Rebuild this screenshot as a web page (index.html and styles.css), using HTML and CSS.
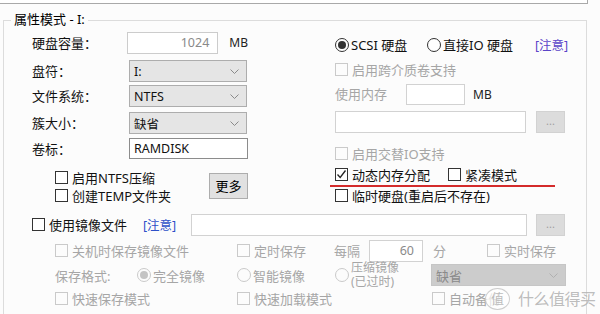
FILE: index.html
```html
<!DOCTYPE html>
<html lang="zh-CN">
<head>
    <meta charset="UTF-8">
    <meta name="viewport" content="width=device-width, initial-scale=1.0">
    <title>属性模式</title>
    <link rel="stylesheet" href="styles.css">
</head>
<body>
<div class="topbox"></div>
<div class="group">
    <div class="group-title">属性模式 - I:</div>
    <div class="main">
        <div class="col-left">
            <div class="field f1"><span class="lbl">硬盘容量：</span><span class="box num w93">1024</span><span class="unit">MB</span></div>
            <div class="field f2"><span class="lbl">盘符：</span><span class="combo w118 h21">I:<svg class="chev" width="9" height="5" viewBox="0 0 9 5"><polyline points="0.5,0.5 4.5,4.5 8.5,0.5"/></svg></span></div>
            <div class="field f3"><span class="lbl">文件系统：</span><span class="combo w118 h23">NTFS<svg class="chev" width="9" height="5" viewBox="0 0 9 5"><polyline points="0.5,0.5 4.5,4.5 8.5,0.5"/></svg></span></div>
            <div class="field f4"><span class="lbl">簇大小：</span><span class="combo w118">缺省<svg class="chev" width="9" height="5" viewBox="0 0 9 5"><polyline points="0.5,0.5 4.5,4.5 8.5,0.5"/></svg></span></div>
            <div class="field f5"><span class="lbl">卷标：</span><span class="box dark w119 h21">RAMDISK</span></div>
            <div class="opts">
                <div class="opt-list">
                    <div class="check-row"><span class="cb"></span>启用NTFS压缩</div>
                    <div class="check-row"><span class="cb"></span>创建TEMP文件夹</div>
                </div>
                <span class="btn">更多</span>
            </div>
        </div>
        <div class="col-right">
            <div class="rrow ra">
                <span class="item w92"><span class="rb on"></span>SCSI 硬盘</span>
                <span class="item w108"><span class="rb"></span>直接IO 硬盘</span>
                <span class="note purple">[注意]</span>
            </div>
            <div class="rrow rb-row off"><span class="cb"></span>启用跨介质卷支持</div>
            <div class="rrow rc off">
                <span class="w71">使用内存</span><span class="box w59 h21 lite"></span><span class="unit small">MB</span>
            </div>
            <div class="rrow rd">
                <span class="box w191 lite"></span><span class="dots">...</span>
            </div>
            <div class="rrow re off"><span class="cb"></span>启用交替IO支持</div>
            <div class="rrow rf marked">
                <span class="item w113"><span class="cb"><svg width="11" height="11" viewBox="0 0 11 11"><polyline points="1.5,5.5 4.2,8.5 9.5,1.5"/></svg></span>动态内存分配</span>
                <span class="item"><span class="cb"></span>紧凑模式</span>
            </div>
            <div class="rrow rg"><span class="cb"></span>临时硬盘(重启后不存在)</div>
        </div>
    </div>
    <div class="image-row">
        <span class="item w111"><span class="cb"></span>使用镜像文件</span>
        <span class="note blue w48">[注意]</span>
        <span class="box w336 lite"></span>
        <span class="dots gap9">...</span>
    </div>
    <div class="sub off">
        <div class="srow s1">
            <span class="item w182"><span class="cb"></span>关机时保存镜像文件</span>
            <span class="item w97"><span class="cb"></span>定时保存</span>
            <span class="w35">每隔</span>
            <span class="box num w54 lite">60</span>
            <span class="w64 pad10">分</span>
            <span class="item"><span class="cb"></span>实时保存</span>
        </div>
        <div class="srow s2">
            <span class="w82">保存格式:</span>
            <span class="item w100"><span class="rb on"></span>完全镜像</span>
            <span class="item w98"><span class="rb"></span>智能镜像</span>
            <span class="item w96"><span class="rb"></span><span class="two">压缩镜像<br>(已过时)</span></span>
            <span class="combo w135 h23 dis">缺省<svg class="chev" width="9" height="5" viewBox="0 0 9 5"><polyline points="0.5,0.5 4.5,4.5 8.5,0.5"/></svg></span>
        </div>
        <div class="srow s3">
            <span class="item w182"><span class="cb"></span>快速保存模式</span>
            <span class="item w195"><span class="cb"></span>快速加载模式</span>
            <span class="item"><span class="cb"></span>自动备份</span>
        </div>
    </div>
</div>
<div class="watermark"><span class="wm-ring">值</span><span class="wm-text">什么值得买</span></div>
</body>
</html>
```

FILE: styles.css
```css
body {
    margin: 0;
    width: 600px;
    height: 314px;
    overflow: hidden;
    position: relative;
    background: #fcfcfc;
    font-family: "Noto Sans", "Noto Sans CJK SC", sans-serif;
    font-size: 13px;
    color: #111;
}
.topbox {
    width: 587px;
    height: 3px;
    background: #fff;
    border-right: 1px solid #a9a9a9;
    border-bottom: 1px solid #a9a9a9;
}
.group {
    margin: 16px 0 0 3px;
    width: 582px;
    height: 293px;
    border: 1px solid #dcdcdc;
    border-bottom: none;
}
.group-title {
    width: max-content;
    margin: -11px 0 0 7px;
    padding: 0 3px;
    line-height: 18px;
    background: #fcfcfc;
    color: #000;
}
.main {
    display: flex;
    height: 178px;
    margin-top: 4px;
    padding-left: 28px;
}
.col-left {
    width: 216px;
}
.col-right {
    width: 240px;
    margin-left: 87px;
}

/* left column rows */
.field {
    display: flex;
    align-items: flex-start;
}
.f1 { height: 28px; }
.f2 { height: 25px; }
.f3 { height: 27px; }
.f4 { height: 26px; }
.f5 { height: 26px; }
.lbl {
    width: 97px;
    line-height: 22px;
}
.unit {
    margin-left: 11px;
    line-height: 22px;
    font-size: 12px;
    color: #222;
}
.unit.small {
    margin-left: 8px;
}
.box {
    box-sizing: border-box;
    height: 22px;
    border: 1px solid #cccccc;
    background: #fff;
    padding: 0 4px;
    line-height: 20px;
    font-size: 12.5px;
}
.box.num {
    text-align: right;
    padding-right: 8px;
    color: #8a8a8a;
}
.box.dark {
    border-color: #8c8c8c;
    color: #111;
}
.box.lite {
    border-color: #d2d2d2;
}
.h21 { height: 21px; }
.h23 { height: 23px; }
.combo {
    display: flex;
    justify-content: space-between;
    align-items: center;
    box-sizing: border-box;
    height: 22px;
    padding: 0 7px 0 4px;
    border: 1px solid #adadad;
    background: #e5e5e5;
    font-size: 12.5px;
}
.chev {
    fill: none;
    stroke: #8a8a8a;
    stroke-width: 1;
}
.combo.dis {
    border-color: #c6c6c6;
    background: #cccccc;
    color: #8a8a8a;
    font-size: 13px;
}
.combo.dis .chev {
    stroke: #b0b0b0;
}

/* option block under the left fields */
.opts {
    display: flex;
    justify-content: space-between;
    margin-top: 4px;
    padding-left: 23px;
}
.check-row {
    display: flex;
    align-items: center;
    height: 18px;
}
.btn {
    box-sizing: border-box;
    width: 39px;
    height: 26px;
    margin-top: 5px;
    border: 1px solid #adadad;
    background: #e1e1e1;
    text-align: center;
    line-height: 24px;
    color: #000;
}

/* checkboxes and radios */
.cb {
    flex: none;
    display: flex;
    align-items: center;
    justify-content: center;
    box-sizing: border-box;
    width: 13px;
    height: 13px;
    margin-right: 4px;
    border: 1px solid #333;
    background: #fff;
}
.cb svg {
    fill: none;
    stroke: #222;
    stroke-width: 1.3;
}
.rb {
    flex: none;
    display: flex;
    align-items: center;
    justify-content: center;
    box-sizing: border-box;
    width: 14px;
    height: 14px;
    margin-right: 2px;
    border: 1px solid #333;
    border-radius: 50%;
    background: #fff;
}
.rb.on::after {
    content: "";
    width: 8px;
    height: 8px;
    border-radius: 50%;
    background: #333;
}
.off {
    color: #a6a6a6;
}
.off .cb,
.off .rb {
    border-color: #cacaca;
    background: #fcfcfc;
}
.off .rb.on::after {
    background: #c4c4c4;
}
.item {
    display: flex;
    align-items: center;
    white-space: nowrap;
}

/* right column rows */
.rrow {
    display: flex;
    align-items: center;
    white-space: nowrap;
}
.ra { height: 25px; }
.rb-row { height: 25px; }
.rc {
    height: 26px;
    align-items: flex-start;
    padding-top: 2px;
    box-sizing: border-box;
    line-height: 21px;
}
.rd {
    height: 35px;
    align-items: flex-start;
    padding-top: 3px;
    box-sizing: border-box;
}
.re, .rf, .rg { height: 21px; }
.marked {
    position: relative;
}
.marked::after {
    content: "";
    position: absolute;
    left: -5px;
    top: 21px;
    width: 225px;
    height: 2px;
    background: #d42b2b;
}
.note {
    font-size: 12.5px;
    white-space: nowrap;
}
.purple { color: #5b45c8; }
.blue { color: #2e50c8; }
.dots {
    box-sizing: border-box;
    width: 29px;
    height: 22px;
    margin-left: 10px;
    border: 1px solid #d2d2d2;
    background: #dcdcdc;
    color: #a0a0a0;
    text-align: center;
    line-height: 18px;
    font-size: 11px;
}
.dots.gap9 {
    margin-left: 9px;
}

/* image file section */
.image-row {
    display: flex;
    align-items: center;
    height: 29px;
    padding-left: 28px;
}
.sub {
    padding-left: 51px;
}
.srow {
    display: flex;
    align-items: center;
    white-space: nowrap;
}
.s1 { height: 23px; }
.s2 { height: 26px; }
.s3 { height: 20px; }
.two {
    font-size: 12px;
    line-height: 14px;
}
.pad10 {
    box-sizing: border-box;
    padding-left: 10px;
}

.w35 { width: 35px; }
.w48 { width: 48px; }
.w54 { width: 54px; }
.w59 { width: 59px; }
.w64 { width: 64px; }
.w71 { width: 71px; }
.w82 { width: 82px; }
.w92 { width: 92px; }
.w93 { width: 93px; }
.w96 { width: 96px; }
.w97 { width: 97px; }
.w98 { width: 98px; }
.w100 { width: 100px; }
.w108 { width: 108px; }
.w111 { width: 111px; }
.w113 { width: 113px; }
.w118 { width: 118px; }
.w119 { width: 119px; }
.w135 { width: 135px; }
.w182 { width: 182px; }
.w191 { width: 191px; }
.w195 { width: 195px; }
.w336 { width: 336px; }

/* site watermark over the corner */
.watermark {
    position: absolute;
    left: 485px;
    top: 288px;
    display: flex;
    align-items: center;
    color: rgba(180, 180, 180, 0.9);
}
.wm-ring {
    box-sizing: border-box;
    width: 25px;
    height: 22px;
    border: 1.5px solid rgba(200, 200, 200, 0.9);
    border-radius: 50%;
    background: rgba(255, 255, 255, 0.7);
    text-align: center;
    line-height: 19px;
    font-size: 13px;
}
.wm-text {
    margin-left: 8px;
    font-size: 16px;
    line-height: 20px;
    letter-spacing: -0.5px;
}
```
